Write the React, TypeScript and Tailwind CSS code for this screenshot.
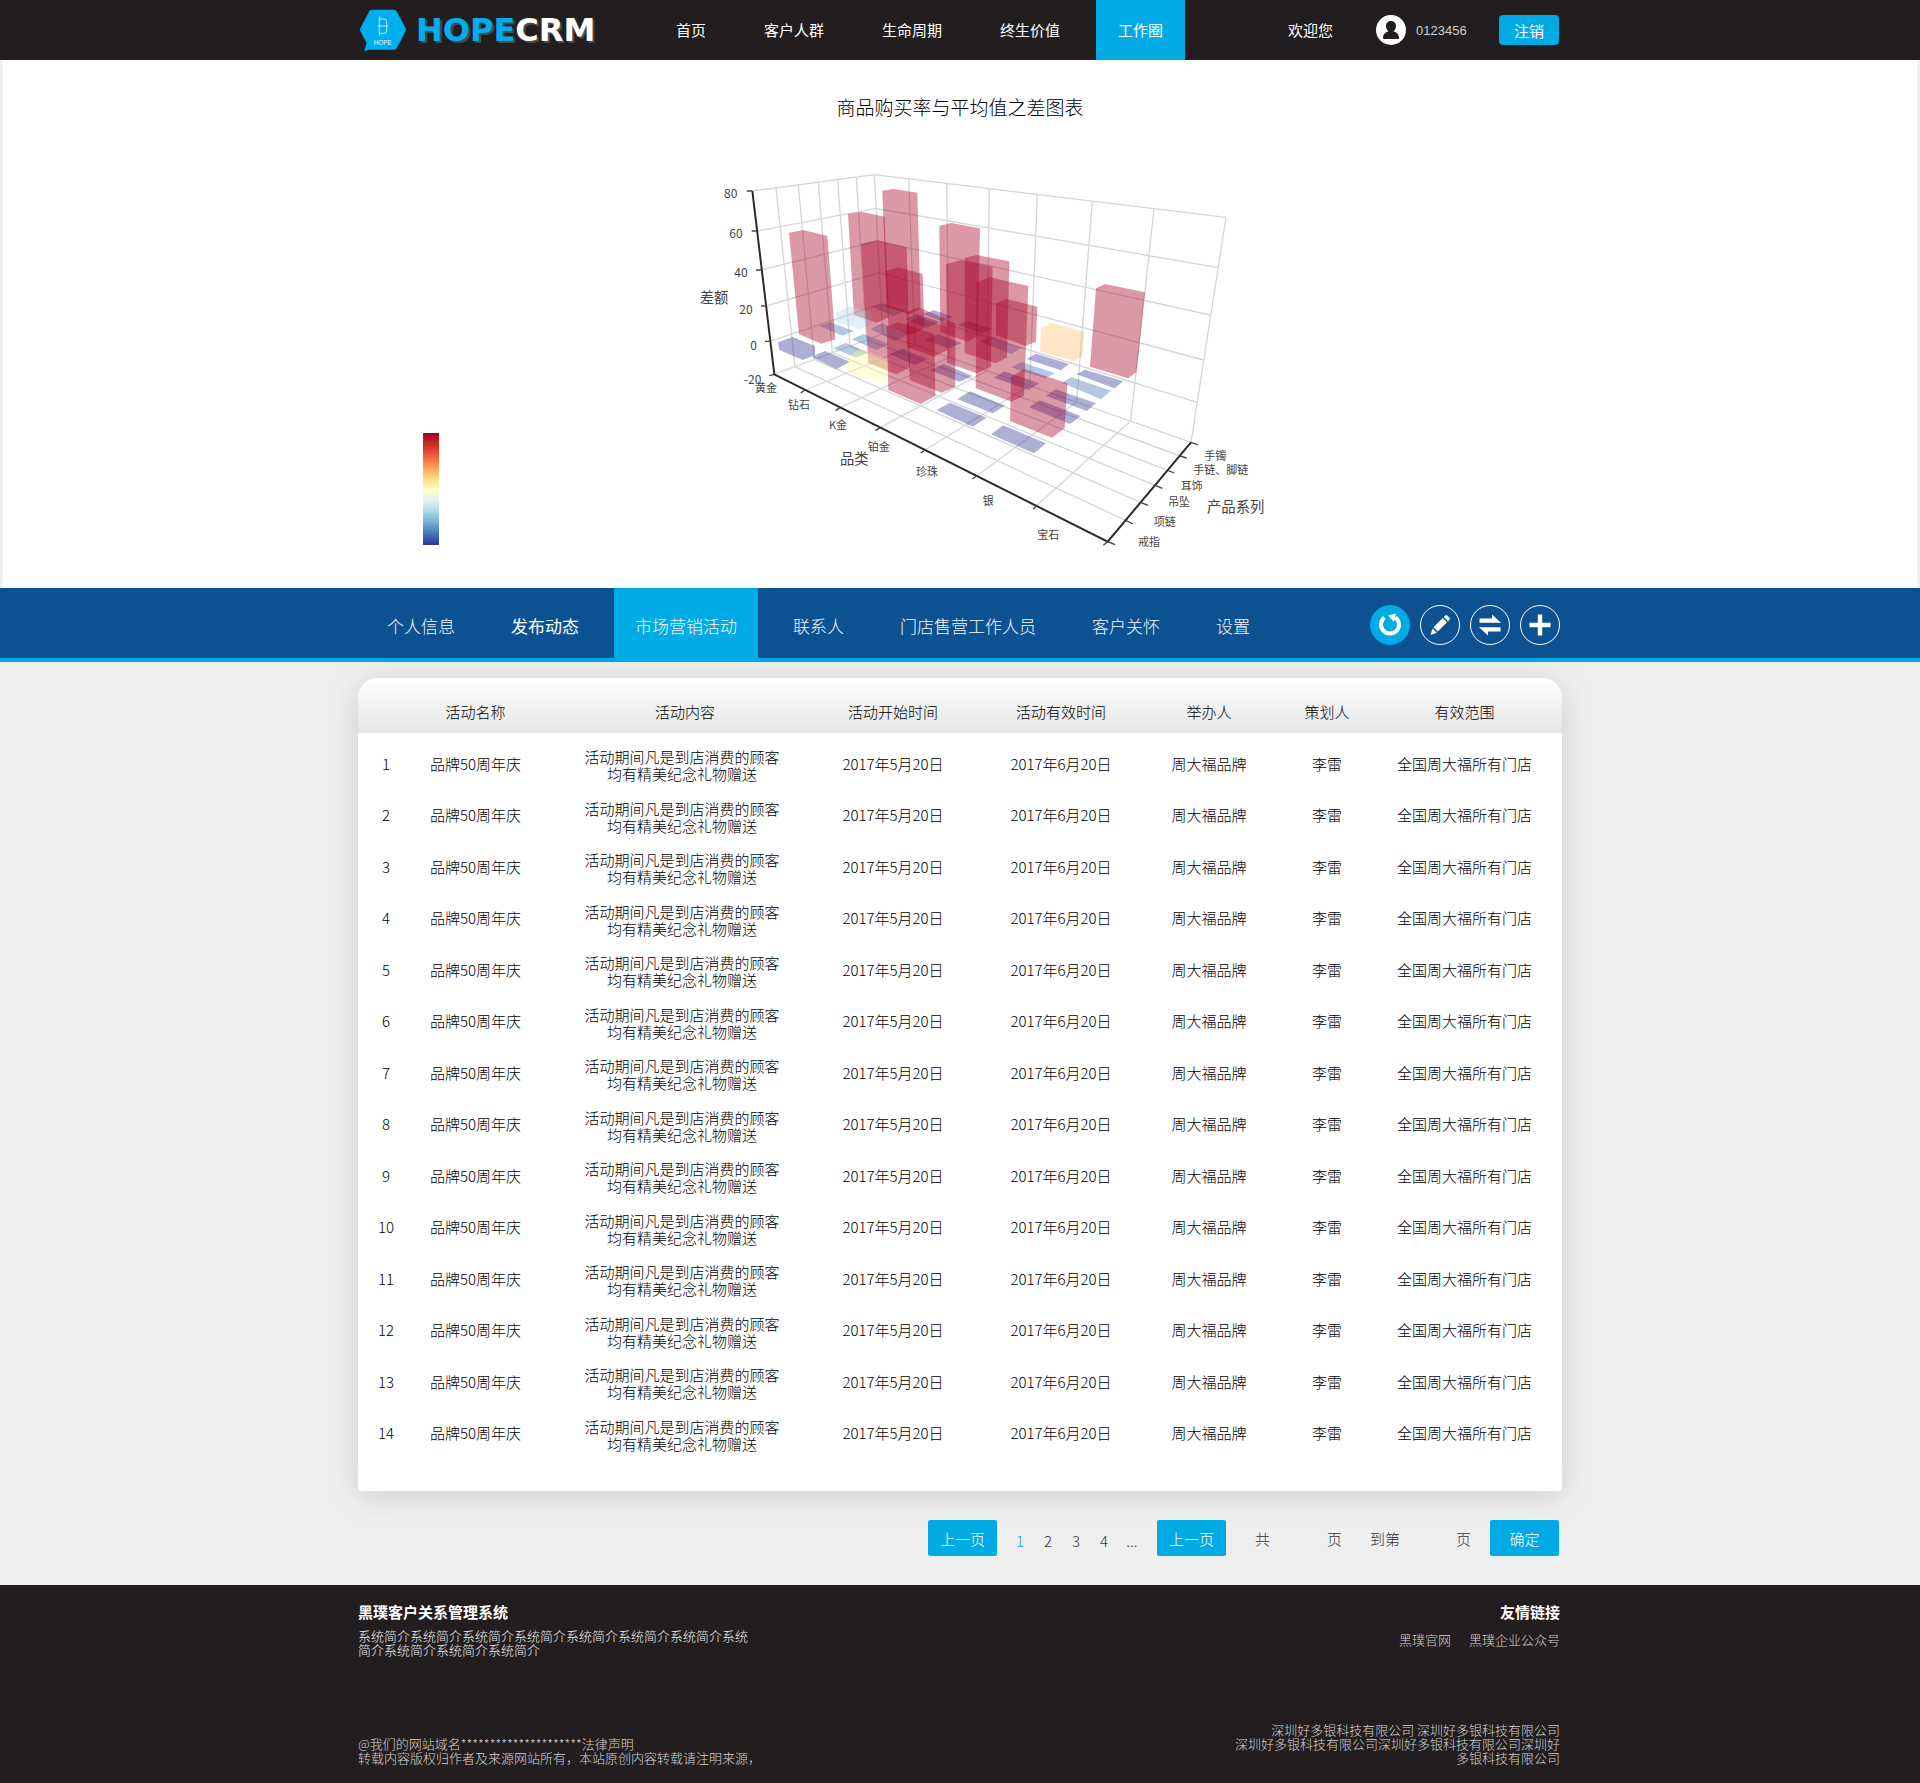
import React from "react";

const MAIN_NAV = ["首页", "客户人群", "生命周期", "终生价值", "工作圈"];
const SUB_NAV = ["个人信息", "发布动态", "市场营销活动", "联系人", "门店售营工作人员", "客户关怀", "设置"];
const COLUMNS = ["活动名称", "活动内容", "活动开始时间", "活动有效时间", "举办人", "策划人", "有效范围"];
const ROWS = Array.from({ length: 14 }, (_, i) => ({
  id: i + 1,
  name: "品牌50周年庆",
  content: ["活动期间凡是到店消费的顾客", "均有精美纪念礼物赠送"],
  start: "2017年5月20日",
  end: "2017年6月20日",
  host: "周大福品牌",
  planner: "李雷",
  scope: "全国周大福所有门店",
}));

/* ---------- 3D bar chart data ---------- */

const WALL_LINES = [
  // horizontal levels on both walls
  "217,93 583,44 1638,172",
  "232,213 587,145 1615,323",
  "243,330 592,243 1590,465",
  "258,438 597,338 1570,600",
  "270,544 603,432 1552,727",
  "283,643 608,522 1533,847",
  // left wall verticals
  "288,84 345,620",
  "355,76 403,598",
  "415,68 457,578",
  "473,60 510,559",
  "529,52 560,540",
  "583,44 608,522",
  // right wall verticals
  "686,58 705,556",
  "800,72 807,592",
  "928,88 921,632",
  "1072,105 1049,677",
  "1237,124 1190,726",
  "1422,147 1352,783",
  "1638,172 1533,847",
];

const FLOOR_LINES = [
  "345,620 1337,1081",
  "403,598 1382,1027",
  "457,578 1427,977",
  "510,559 1465,932",
  "560,540 1500,888",
  "375,690 705,556",
  "480,743 807,592",
  "600,803 921,632",
  "735,870 1049,677",
  "890,948 1190,726",
  "1072,1035 1352,783",
];

const BLUE = "#313695";
const SKY = "#4575b4";
const RED = "#a50026";

const SHAPES: [string, string][] = [
  [SKY, "572,440 608,430 676,452 640,468"],
  [BLUE, "728,462 762,451 820,470 785,484"],
  [BLUE, "833,494 865,484 937,506 905,520"],
  [SKY, "900,545 930,528 1025,563 995,583"],
  [BLUE, "1040,597 1068,581 1167,612 1143,631"],
  [BLUE, "1190,643 1215,629 1330,664 1303,685"],
  [RED, "504,162 545,155 614,170 627,472 590,488 522,465"],
  [RED, "607,92 640,87 712,98 722,447 686,463 620,440"],
  [RED, "778,197 815,189 900,205 893,528 862,545 781,515"],
  ["#fdbe70", "1083,505 1112,489 1213,515 1209,588 1183,603 1080,574"],
  [RED, "1248,385 1275,372 1395,397 1370,635 1345,655 1230,620"],
  ["#abd9e9", "470,455 510,440 577,460 577,490 540,508 470,485"],
  [SKY, "418,498 450,487 522,513 487,527"],
  [SKY, "572,508 605,490 690,520 645,543"],
  [BLUE, "675,478 710,463 780,487 740,503"],
  [SKY, "993,622 1025,606 1125,640 1095,655"],
  [SKY, "1145,668 1175,652 1293,692 1263,718"],
  [RED, "617,333 655,322 728,342 733,505 692,524 625,497"],
  [RED, "854,294 890,285 988,304 981,592 948,610 854,580"],
  [RED, "948,430 980,417 1072,440 1068,545 1037,558 948,525"],
  [RED, "327,218 370,210 442,228 466,538 424,551 357,523"],
  [SKY, "515,538 550,522 628,552 590,570"],
  [BLUE, "735,540 775,523 845,550 805,565"],
  [BLUE, "942,653 973,634 1078,670 1047,690"],
  [BLUE, "1098,707 1127,688 1248,730 1220,753"],
  [RED, "543,252 590,241 680,262 690,622 648,643 565,608"],
  [RED, "680,490 715,470 800,500 803,570 762,590 680,560"],
  [RED, "798,312 843,301 938,320 933,620 890,640 801,608"],
  [SKY, "460,565 497,549 565,577 530,593"],
  [BLUE, "628,582 668,567 742,597 705,615"],
  [BLUE, "750,630 790,612 878,648 838,665"],
  [BLUE, "1047,742 1080,721 1202,768 1170,792"],
  [RED, "890,366 930,352 1045,378 1032,707 995,725 887,685"],
  [BLUE, "294,547 338,531 405,558 405,585 368,600 298,570"],
  [BLUE, "395,590 435,573 510,605 470,627"],
  ["#ffff9f", "503,590 540,567 625,600 625,655 600,670 503,638"],
  [RED, "680,457 715,442 826,490 826,680 785,698 689,660"],
  [RED, "620,500 655,487 763,522 766,708 722,732 625,690"],
  [BLUE, "832,717 870,694 975,737 938,760"],
  [BLUE, "770,750 810,728 920,773 878,800"],
  [BLUE, "933,823 970,796 1098,850 1062,880"],
  [RED, "993,650 1032,627 1162,670 1154,805 1116,833 990,783"],
];

const AXIS_TICKS = [
  "M200 93h17",
  "M215 213h17",
  "M228 330h17",
  "M243 438h17",
  "M255 544h17",
  "M268 647l15-4",
  "M375 690l-13 9",
  "M480 743l-13 9",
  "M600 803l-13 9",
  "M735 870l-13 9",
  "M890 948l-13 9",
  "M1072 1035l-13 13",
  "M1283 1145l-13 11",
  "M1283 1145l22 9",
  "M1337 1081l22 11",
  "M1382 1027l22 9",
  "M1427 977l20 8",
  "M1465 932l18 7",
  "M1500 888l20 6",
  "M1533 847l21 8",
].join("");

const LABELS: [string, number, number, number][] = [
  ["80", 152, 100, 36],
  ["60", 168, 221, 36],
  ["40", 183, 338, 36],
  ["20", 198, 450, 36],
  ["0", 221, 557, 36],
  ["-20", 218, 658, 36],
  ["差额", 102, 413, 43],
  ["黄金", 258, 684, 33],
  ["钻石", 357, 735, 33],
  ["K金", 474, 795, 33],
  ["铂金", 596, 860, 33],
  ["品类", 523, 897, 43],
  ["珍珠", 741, 935, 33],
  ["银", 925, 1022, 33],
  ["宝石", 1105, 1125, 33],
  ["手镯", 1606, 888, 33],
  ["手链、脚链", 1622, 931, 33],
  ["耳饰", 1535, 977, 33],
  ["吊坠", 1497, 1027, 33],
  ["产品系列", 1667, 1041, 43],
  ["项链", 1454, 1085, 33],
  ["戒指", 1407, 1145, 33],
];

function BarChart3D() {
  return (
    <svg
      viewBox="-150 0 1980 1200"
      className="h-[400px] w-[660px]"
      role="img"
      aria-label="商品购买率与平均值之差图表"
    >
      <g fill="none" stroke="#d6d6d6" strokeWidth="4">
        {[...WALL_LINES, ...FLOOR_LINES].map((p) => (
          <polyline key={p} points={p} />
        ))}
      </g>
      {SHAPES.map(([fill, points]) => (
        <polygon key={points} points={points} fill={fill} fillOpacity="0.4" />
      ))}
      <path d="M217 93L283 643L1283 1145L1533 847" fill="none" stroke="#2b2b2b" strokeWidth="6" />
      <path d={AXIS_TICKS} fill="none" stroke="#444" strokeWidth="4" />
      <g fill="#444" textAnchor="middle" className="font-normal">
        {LABELS.map(([text, x, y, size]) => (
          <text key={text} x={x} y={y} fontSize={size} dy="0.36em">
            {text}
          </text>
        ))}
      </g>
    </svg>
  );
}

function Logo() {
  return (
    <a href="#" className="flex items-center gap-2.5" aria-label="HOPECRM">
      <svg viewBox="60 28 138 126" className="h-[42px] w-[46px]" aria-hidden="true">
        <path
          d="M96 30H162Q168 30 171 36L196 84Q199 90 196 96L171 144Q168 150 162 150H88L73 154L80 130L62 96Q59 90 62 84L87 36Q90 30 96 30Z"
          fill="#00aeef"
        />
        <path
          d="M118 50V108M118 58H132Q140 58 140 66V94Q140 101 133 101H118M113 79H145"
          fill="none"
          stroke="#e6f7fe"
          strokeWidth="2.5"
        />
        <text x="128" y="135" fontSize="19" fill="#e6f7fe" textAnchor="middle" fontFamily="Liberation Sans, sans-serif">
          HOPE
        </text>
      </svg>
      <span className="font-['DejaVu_Sans',sans-serif] text-[32px] leading-[36px] font-bold text-white [text-shadow:2px_2px_0_#4a4a4c]">
        <span className="text-[#00aeef]">HOPE</span>CRM
      </span>
    </a>
  );
}

function ToolButton({ label, active, children }: { label: string; active?: boolean; children: React.ReactNode }) {
  return (
    <button
      type="button"
      aria-label={label}
      className={
        active
          ? "size-10 rounded-full border border-[#00aae4] bg-[#00aae4] text-white"
          : "size-10 rounded-full border border-white text-white"
      }
    >
      <svg viewBox="-19 -19 38 38" className="size-full" fill="currentColor" aria-hidden="true">
        {children}
      </svg>
    </button>
  );
}

const pageButton = "h-9 w-[69px] rounded-[2px] bg-[#00aae4] text-center text-white";
const numberInput = "h-7 bg-transparent text-center outline-none";

export default function App() {
  return (
    <div className="bg-[#efefef] font-['Noto_Sans_CJK_SC',sans-serif] text-[15px] leading-[17px] font-light text-black">
      <header className="bg-[#221e1f] text-white">
        <div className="mx-auto flex h-[60px] max-w-[1204px] items-center pr-[3px] pl-0.5">
          <div className="w-[294px]">
            <Logo />
          </div>
          <nav className="flex gap-3.5 self-stretch font-normal">
            {MAIN_NAV.map((item) => (
              <a
                key={item}
                href="#"
                className={
                  item === "工作圈"
                    ? "flex items-center bg-[#00aae4] px-[22px] pb-0.5"
                    : "flex items-center px-[22px] pb-0.5"
                }
              >
                {item}
              </a>
            ))}
          </nav>
          <div className="ml-auto flex items-center">
            <span className="pb-0.5 font-normal">欢迎您</span>
            <svg viewBox="-15 -15 30 30" className="ml-[43px] size-[30px]" aria-hidden="true">
              <circle r="15" fill="#fff" />
              <path
                d="M0 -9C3 -9 5 -7 5 -4C5 -2 4 0 2.500 1.300C6 2.500 8 4.500 8 7.500C8 8.600 7.500 9 6.500 9H-6.500C-7.500 9 -8 8.600 -8 7.500C-8 4.500 -6 2.500 -2.500 1.300C-4 0 -5 -2 -5 -4C-5 -7 -3 -9 0 -9Z"
                fill="#221e1f"
              />
            </svg>
            <span className="ml-2.5 w-[83px] font-['Liberation_Sans',sans-serif] text-[13px] text-[#d0d0d0]">
              0123456
            </span>
            <button type="button" className="h-[30px] w-[60px] rounded-[4px] bg-[#00aae4] font-normal">
              注销
            </button>
          </div>
        </div>
      </header>

      <section className="mx-[3px] bg-white pt-9 pb-7">
        <h1 className="text-center text-[19px] leading-[22px]">商品购买率与平均值之差图表</h1>
        <div className="mx-auto mt-[42px] grid max-w-[1204px] grid-cols-[1fr_auto_1fr]">
          <div className="mb-[15px] ml-[65px] h-28 w-4 self-end bg-[linear-gradient(to_bottom,#a50026,#d73027_12%,#f46d43_23%,#fdae61_33%,#fee090_42%,#ffffbf_51%,#e0f3f8_60%,#abd9e9_70%,#74add1_80%,#4575b4_90%,#313695)]" />
          <BarChart3D />
        </div>
      </section>

      <div className="relative bg-[#0c5293] text-[17px] text-[#f4f8fb] shadow-[inset_0_-4px_0_#00aae4]">
        <div className="mx-auto flex h-[74px] max-w-[1204px] items-center justify-between pr-0.5 pl-2">
          <nav className="flex gap-3.5 self-stretch">
            {SUB_NAV.map((item) => (
              <a
                key={item}
                href="#"
                className={
                  item === "市场营销活动"
                    ? "flex items-center bg-[#00aae4] px-[21px]"
                    : item === "发布动态"
                      ? "flex items-center px-[21px] font-normal text-white"
                      : "flex items-center px-[21px]"
                }
              >
                {item}
              </a>
            ))}
          </nav>
          <div className="flex gap-2.5">
            <ToolButton label="刷新" active>
              <path
                d="M-5.500 -7.500A9 9 0 1 0 5.500 -7.500"
                fill="none"
                stroke="currentColor"
                strokeWidth="4"
              />
              <path d="M-2 -9.500L6 -11.500L4 -3Z" />
            </ToolButton>
            <ToolButton label="编辑">
              <path d="M-9.500 10L-7.500 3.500L-3.200 7.800Z M-6.500 2.300L2.800 -7L7 -2.800L-2.200 6.500Z M3.800 -8L5.300 -9.500Q6.300 -10.300 7.300 -9.500L9.500 -7.300Q10.300 -6.300 9.500 -5.300L8 -3.800Z" />
            </ToolButton>
            <ToolButton label="切换">
              <path d="M-10.500 -6.500H2V-10.500L11 -2.200H-10.500Z M10.500 6.500H-2V10.500L-11 2.200H10.500Z" />
            </ToolButton>
            <ToolButton label="新增">
              <path d="M-10.500 -2.200H-2.200V-10.500H2.200V-2.200H10.500V2.200H2.200V10.500H-2.200V2.200H-10.500Z" />
            </ToolButton>
          </div>
        </div>
      </div>

      <main className="mx-auto max-w-[1204px] pt-4 pb-[29px]">
        <div className="overflow-hidden rounded-t-[20px] bg-white pb-8 shadow-[0_4px_32px_rgba(0,0,0,0.14)]">
          <table className="w-full table-fixed text-center">
            <colgroup>
              <col className="w-[47px]" />
              <col className="w-[141px]" />
              <col className="w-[278px]" />
              <col className="w-[138px]" />
              <col className="w-[198px]" />
              <col className="w-[98px]" />
              <col className="w-[138px]" />
              <col className="w-[166px]" />
            </colgroup>
            <thead className="bg-linear-to-b from-white to-[#e6e6e6]">
              <tr className="h-[55px]">
                <td />
                {COLUMNS.map((c) => (
                  <th key={c} scope="col" className="p-0 pt-3 font-light last:pr-[29px]">
                    {c}
                  </th>
                ))}
              </tr>
            </thead>
            <tbody>
              <tr className="h-[5px]" aria-hidden="true" />
              {ROWS.map((r) => (
                <tr key={r.id} className="odd:h-[51px] even:h-[52px]">
                  <td className="p-0 pb-0.5 pl-[9px]">{r.id}</td>
                  <td className="p-0 pb-0.5">{r.name}</td>
                  <td className="p-0 pt-0.5 pr-1.5">
                    {r.content[0]}
                    <br />
                    {r.content[1]}
                  </td>
                  <td className="p-0 pb-0.5">{r.start}</td>
                  <td className="p-0 pb-0.5">{r.end}</td>
                  <td className="p-0 pb-0.5">{r.host}</td>
                  <td className="p-0 pb-0.5">{r.planner}</td>
                  <td className="p-0 pr-[29px] pb-0.5 whitespace-nowrap">{r.scope}</td>
                </tr>
              ))}
            </tbody>
          </table>
        </div>

        <div className="mt-[29px] flex items-center justify-end pr-[3px] text-[#333]">
          <button type="button" className={pageButton}>
            上一页
          </button>
          <div className="mr-[11px] ml-[9px] flex pt-1">
            {["1", "2", "3", "4"].map((n) => (
              <button key={n} type="button" className={n === "1" ? "w-7 text-[#1c9cdd]" : "w-7"}>
                {n}
              </button>
            ))}
            <span className="w-7 text-center">...</span>
          </div>
          <button type="button" className={pageButton}>
            上一页
          </button>
          <label className="ml-[29px] flex items-center">
            共
            <input className={`${numberInput} w-[57px]`} aria-label="总页数" />页
          </label>
          <label className="ml-7 flex items-center">
            到第
            <input className={`${numberInput} w-[56px]`} aria-label="到第几页" />页
          </label>
          <button type="button" className={`${pageButton} ml-[19px]`}>
            确定
          </button>
        </div>
      </main>

      <footer className="bg-[#221e1f] text-[13px] leading-[14px] text-[#d4d4d4]">
        <div className="mx-auto flex min-h-[198px] max-w-[1204px] justify-between pt-[18px] pr-0.5 pb-[18px]">
          <div className="flex flex-col">
            <h2 className="text-[15px] leading-[18px] font-bold text-white">黑璞客户关系管理系统</h2>
            <p className="mt-2 text-[#f0f0f0]">
              系统简介系统简介系统简介系统简介系统简介系统简介系统简介系统
              <br />
              简介系统简介系统简介系统简介
            </p>
            <p className="mt-auto">
              @我们的网站域名*********************法律声明
              <br />
              转载内容版权归作者及来源网站所有，本站原创内容转载请注明来源，
            </p>
          </div>
          <div className="flex flex-col text-right">
            <h2 className="text-[15px] leading-[18px] font-bold text-white">友情链接</h2>
            <p className="mt-3 flex justify-end gap-[18px]">
              <a href="#">黑璞官网</a>
              <a href="#">黑璞企业公众号</a>
            </p>
            <p className="mt-auto">
              深圳好多银科技有限公司 深圳好多银科技有限公司
              <br />
              深圳好多银科技有限公司深圳好多银科技有限公司深圳好
              <br />
              多银科技有限公司
            </p>
          </div>
        </div>
      </footer>
    </div>
  );
}
